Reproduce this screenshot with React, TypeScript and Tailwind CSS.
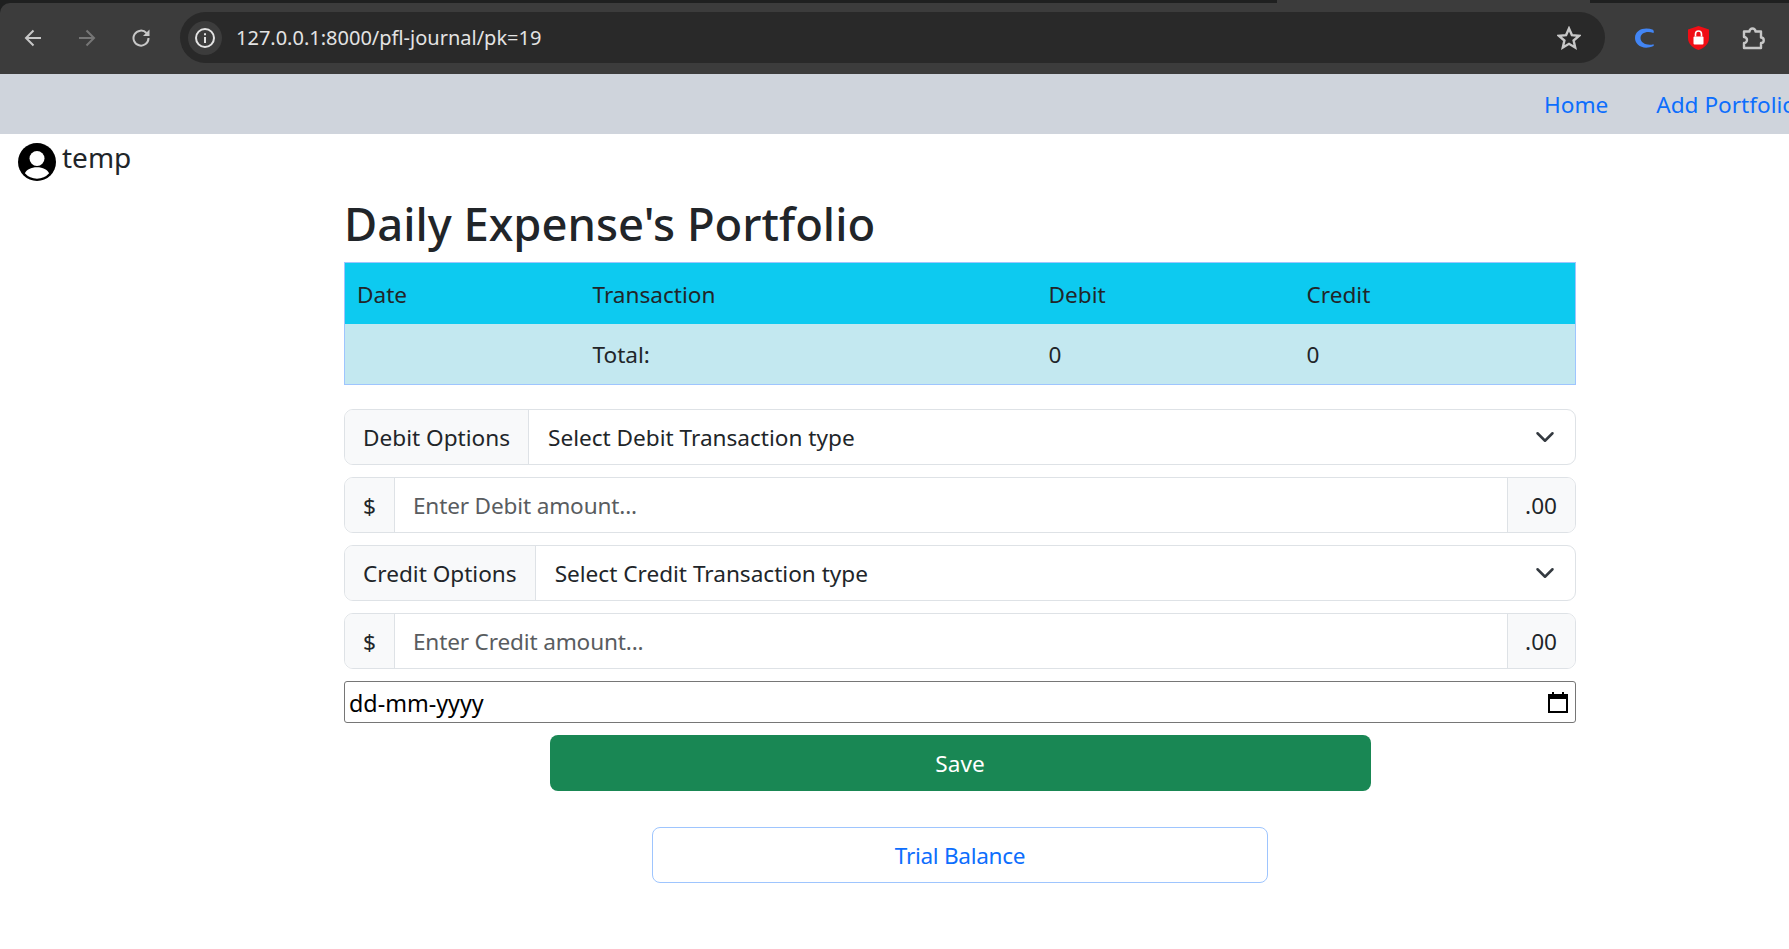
function ChevronDown() {
  return (
    <svg width="20" height="20" viewBox="0 0 16 16" fill="none">
      <path d="m2 5 6 6 6-6" stroke="#343a40" strokeWidth="2" strokeLinecap="round" strokeLinejoin="round" />
    </svg>
  );
}

function SelectRow({ label, text }: Readonly<{ label: string; text: string }>) {
  return (
    <div className="flex h-[56px] rounded-[9px] border border-[#dee2e6] overflow-hidden">
      <div className="flex items-center px-[18px] pt-[2px] bg-[#f8f9fa] border-r border-[#dee2e6] whitespace-nowrap">{label}</div>
      <div className="flex-1 flex items-center justify-between pl-[19px] pr-[20px]">
        <span className="pt-[2px]">{text}</span>
        <ChevronDown />
      </div>
    </div>
  );
}

function AmountRow({ placeholder }: Readonly<{ placeholder: string }>) {
  return (
    <div className="flex h-[56px] rounded-[9px] border border-[#dee2e6] overflow-hidden">
      <div className="flex items-center px-[18px] pt-[2px] bg-[#f8f9fa] border-r border-[#dee2e6]">$</div>
      <input className="flex-1 px-[18px] pt-[2px] outline-none tracking-[-0.16px] placeholder:text-[#595c5f]" placeholder={placeholder} />
      <div className="flex items-center pl-[17px] pr-[18px] pt-[2px] bg-[#f8f9fa] border-l border-[#dee2e6]">.00</div>
    </div>
  );
}

export default function App() {
  return (
    <div className="h-[949px] w-[1789px] overflow-hidden bg-white text-[#212529] font-['Noto_Sans',sans-serif] text-[22.6px]">
      {/* Browser chrome */}
      <div className="h-[74px] bg-[#1f2020]">
        <div className="flex h-[3px]">
          <div className="w-[1277px]" />
          <div className="w-[313px] bg-[#3c3c3c]" />
        </div>
        <div className="h-[71px] bg-[#3c3c3c] rounded-tl-[10px] flex items-center pb-[2px]">
          <div className="flex items-center w-[180px]">
            <svg width="18" height="18" viewBox="0 0 18 18" fill="none" stroke="#c7c7c7" strokeWidth="2" className="ml-[24px]">
              <path d="M17 9H2.500M9.500 1.500 2 9l7.500 7.500" />
            </svg>
            <svg width="18" height="18" viewBox="0 0 18 18" fill="none" stroke="#767676" strokeWidth="2" className="ml-[36px]">
              <path d="M1 9h14.500M8.500 1.500 16 9l-7.500 7.500" />
            </svg>
            <svg width="18" height="18" viewBox="0 0 18 18" fill="none" className="ml-[36px]">
              <path d="M14.500 4A7.500 7.500 0 1 0 16.500 9" stroke="#c7c7c7" strokeWidth="2" />
              <path d="M17.500 .5v6.500h-6.500z" fill="#c7c7c7" />
            </svg>
          </div>
          <div className="w-[1425px] h-[51px] rounded-full bg-[#292929] flex items-center justify-between pl-[8px] pr-[24px]">
            <div className="flex items-center gap-[14px]">
              <div className="w-[34px] h-[34px] rounded-full bg-[#3c3c3c] flex items-center justify-center">
                <svg width="22" height="22" viewBox="0 0 22 22" fill="none">
                  <circle cx="11" cy="11" r="9" stroke="#e3e3e3" strokeWidth="2" />
                  <path d="M11 10v6M11 6.200v2" stroke="#e3e3e3" strokeWidth="2" />
                </svg>
              </div>
              <span className="text-[#e3e3e3] text-[20px]">127.0.0.1:8000/pfl-journal/pk=19</span>
            </div>
            <svg width="24" height="24" viewBox="0 0 24 24" fill="none">
              <path d="M12 2.500l2.900 6.600 7.100.7-5.400 4.700 1.600 7-6.200-3.700-6.200 3.700 1.600-7L2 9.800l7.100-.7z" stroke="#c7c7c7" strokeWidth="2.400" />
            </svg>
          </div>
          <div className="flex items-center">
            <svg width="19" height="20" viewBox="0 0 19 20" className="ml-[30px]">
              <path d="M18 1.800C10 -1.500 0 1.500 0 10c0 7 8 12.500 18.500 8 .4-.6.4-1.200 0-1.800C12 18 5.500 15 5.500 10 5.500 5 12 2.500 18.500 5c.6-1 .3-2.400-.5-3.200z" fill="#4285f4" />
            </svg>
            <svg width="21" height="24" viewBox="0 0 21 24" className="ml-[34px]">
              <path d="M10.500 0 21 3.500V12c0 6-5 10-10.500 12C5 22 0 18 0 12V3.500z" fill="#f00d15" />
              <rect x="5.500" y="10.500" width="10" height="8" rx="1" fill="#fff" />
              <path d="M7.500 10.500V8a3 3 0 0 1 6 0v2.500" stroke="#fff" strokeWidth="1.600" fill="none" />
            </svg>
            <svg width="25" height="24" viewBox="0 0 25 24" fill="none" className="ml-[33px]">
              <path d="M2 5.500h5.500a3 3 0 0 1 6 0H19v6a2.500 2.500 0 0 1 0 5.500v5H2v-5a3 3 0 0 0 0-6z" stroke="#c7c7c7" strokeWidth="2.400" strokeLinejoin="round" />
            </svg>
          </div>
        </div>
      </div>

      {/* Nav */}
      <nav className="h-[60px] bg-[#cfd4dc] flex items-center pl-[1544px] pt-[2px] gap-[48px] whitespace-nowrap text-[#0d6efd]">
        <a>Home</a>
        <a>Add Portfolio</a>
      </nav>

      {/* User */}
      <div className="flex items-start pl-[18px] pt-[9px] h-[46px]">
        <svg width="38" height="38" viewBox="0 0 16 16">
          <circle cx="8" cy="8" r="8" fill="#000" />
          <circle cx="8" cy="6.500" r="3.150" fill="#fff" />
          <path d="M2.900 12.700C3.600 11.200 5.500 10.200 8 10.200s4.400 1 5.100 2.500a6.800 6.800 0 0 1-10.200 0z" fill="#fff" />
        </svg>
        <span className="ml-[6px] text-[28px] leading-[32px] -mt-[2px]">temp</span>
      </div>

      {/* Main */}
      <main className="ml-[344px] w-[1232px]">
        <h1 className="text-[45.4px] leading-[60px] font-medium mt-[13px] mb-[9px]">Daily Expense's Portfolio</h1>
        <table className="w-full table-fixed border border-[#9ec5fe] mb-[24px]">
          <colgroup>
            <col className="w-[236px]" />
            <col className="w-[456px]" />
            <col className="w-[258px]" />
            <col />
          </colgroup>
          <tbody>
            <tr className="bg-[#0dcaf0] h-[61px]">
              <td className="px-3 pt-[3px]">Date</td>
              <td className="px-3 pt-[3px]">Transaction</td>
              <td className="px-3 pt-[3px]">Debit</td>
              <td className="px-3 pt-[3px]">Credit</td>
            </tr>
            <tr className="bg-[#c3e8f0] h-[61px]">
              <td className="px-3 pt-[3px]"></td>
              <td className="px-3 pt-[3px]">Total:</td>
              <td className="px-3 pt-[3px]">0</td>
              <td className="px-3 pt-[3px]">0</td>
            </tr>
          </tbody>
        </table>

        <div className="flex flex-col gap-[12px]">
          <SelectRow label="Debit Options" text="Select Debit Transaction type" />
          <AmountRow placeholder="Enter Debit amount..." />
          <SelectRow label="Credit Options" text="Select Credit Transaction type" />
          <AmountRow placeholder="Enter Credit amount..." />
          <div className="h-[42px] rounded-[3px] border border-[#767676] flex items-center justify-between pl-[4px] pr-[5px] text-black">
            <span className="pt-[2px] text-[23.3px]">dd-mm-yyyy</span>
            <svg width="24" height="24" viewBox="0 0 24 24" fill="none">
              <rect x="3" y="5" width="18" height="17" stroke="#000" strokeWidth="2" />
              <path d="M3 5h18v3H3zM7 2v3M17 2v3" fill="#000" stroke="#000" strokeWidth="2" />
            </svg>
          </div>
          <div className="flex flex-col items-center">
            <button className="w-[821px] h-[56px] pt-[2px] rounded-[8px] bg-[#198754] text-white">Save</button>
            <button className="w-[616px] h-[56px] pt-[2px] rounded-[8px] border border-[#9ec5fe] text-[#0d6efd] tracking-[-0.3px] mt-[36px]">Trial Balance</button>
          </div>
        </div>
      </main>
    </div>
  );
}
